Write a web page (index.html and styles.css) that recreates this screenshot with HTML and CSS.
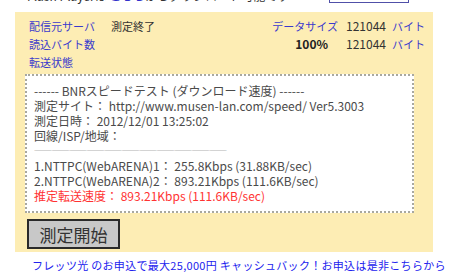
FILE: index.html
```html
<!DOCTYPE html>
<html lang="ja">
<head>
  <meta charset="UTF-8" />
  <title>BNRスピードテスト</title>
  <link rel="stylesheet" href="styles.css">
</head>
<body>
  <div class="top-line">
    <span class="top-text">Flash Playerは <a class="top-link">こちら</a>からダウンロード可能です</span>
    <span class="top-box"></span>
  </div>

  <div class="panel">
    <div class="panel-head">
      <div class="labels">
        <div class="row"><span class="label">配信元サーバ</span><span class="status">測定終了</span></div>
        <div class="row"><span class="label">読込バイト数</span></div>
        <div class="row"><span class="label">転送状態</span></div>
      </div>
      <div class="sizes">
        <span class="label">データサイズ</span><span class="num">121044</span><span class="label">バイト</span>
        <span class="percent">100%</span><span class="num">121044</span><span class="label">バイト</span>
      </div>
    </div>

    <div class="result">
      <div>------ BNRスピードテスト (ダウンロード速度) ------</div>
      <div>測定サイト： http://www.musen-lan.com/speed/ Ver5.3003</div>
      <div>測定日時： 2012/12/01 13:25:02</div>
      <div>回線/ISP/地域：</div>
      <div class="rule">―――――――――――――――――――――――――――――――――</div>
      <div>1.NTTPC(WebARENA)1： 255.8Kbps (31.88KB/sec)</div>
      <div>2.NTTPC(WebARENA)2： 893.21Kbps (111.6KB/sec)</div>
      <div class="speed">推定転送速度： 893.21Kbps (111.6KB/sec)</div>
    </div>

    <button class="start-button">測定開始</button>
  </div>

  <a class="promo">フレッツ光 のお申込で最大25,000円 キャッシュバック！お申込は是非こちらから</a>
</body>
</html>
```

FILE: styles.css
```css
* {
  margin: 0;
  padding: 0;
  box-sizing: border-box;
}

body {
  font-family: "Noto Sans CJK JP", "Noto Sans", sans-serif;
  background: #ffffff;
  color: #333333;
  width: 450px;
  height: 280px;
  overflow: hidden;
}

/* cut-off line above the panel */
.top-line {
  height: 12px;
  overflow: hidden;
  display: flex;
  align-items: flex-end;
  padding-left: 27px;
}

.top-text {
  font-size: 12px;
  line-height: 12px;
  margin-bottom: 10px;
  color: #333333;
  width: 302px;
  white-space: nowrap;
}

.top-link {
  color: #3333cc;
}

.top-box {
  width: 80px;
  height: 12px;
  margin-bottom: 9px;
  border: 1px solid #5050a8;
}

.panel {
  margin-left: 15px;
  width: 418px;
  height: 240px;
  background: #fdedb4;
  padding-top: 5px;
}

.panel-head {
  display: flex;
  justify-content: space-between;
  padding: 0 8px 0 14px;
  font-size: 11px;
  line-height: 18px;
}

.row {
  display: flex;
  gap: 16px;
}

.label {
  color: #3a3acc;
}

.status {
  color: #333333;
}

.sizes {
  display: grid;
  grid-template-columns: auto auto auto;
  column-gap: 6px;
  align-content: start;
  text-align: right;
}

.sizes .num {
  font-size: 12px;
  color: #333333;
  padding-left: 2px;
}

.percent {
  font-size: 12px;
  font-weight: bold;
  color: #222222;
  padding-right: 10px;
}

.result {
  margin: 3px 19px 0 10px;
  height: 139px;
  background: #ffffff;
  border: 2px dotted #a8a8a0;
  padding: 7px 7px 0;
  font-size: 12px;
  line-height: 15px;
  color: #4a4a4a;
  white-space: nowrap;
}

.rule {
  font-size: 6px;
  letter-spacing: -0.5px;
  color: #666666;
}

.speed {
  color: #ff3333;
}

.start-button {
  margin: 6px 0 0 12px;
  width: 93px;
  height: 30px;
  background: #c8c8c8;
  border: 2px solid #2a2a2a;
  font-family: inherit;
  font-size: 17px;
  color: #333333;
}

.promo {
  display: block;
  margin: 6px 0 0 32px;
  font-size: 11px;
  line-height: 14px;
  letter-spacing: 0.3px;
  color: #2222ee;
  white-space: nowrap;
}
```
